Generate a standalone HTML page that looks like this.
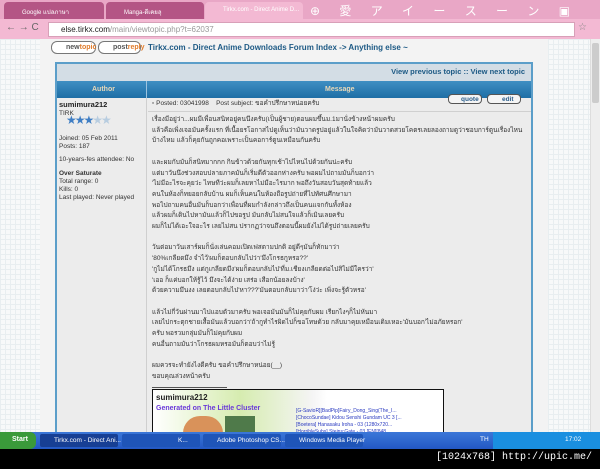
<!DOCTYPE html>
<html><head><meta charset="utf-8"><style>
*{margin:0;padding:0;box-sizing:border-box}
body{width:600px;height:469px;overflow:hidden;background:#f2f2f2;font-family:"Liberation Sans","DejaVu Sans",sans-serif;position:relative}
.abs{position:absolute}
#tabs{left:0;top:0;width:600px;height:19px;background:#e9a7c6}
.tab{position:absolute;top:2px;height:17px;border-radius:4px 4px 0 0;font-size:6px;color:#fff;padding:5px 0 0 18px;white-space:nowrap}
#addr{left:0;top:19px;width:600px;height:20px;background:#f3b9d3}
#url{left:48px;top:22px;width:527px;height:15px;background:#fff;border:1px solid #d8a0b8;font-size:8px;padding:2px 0 0 12px;color:#999}
#page{left:0;top:39px;width:590px;height:393px;background:#fff}
#lgrid{left:0;top:39px;width:40px;height:393px;background:#f7f9f9;background-image:linear-gradient(#e8eef0 1px,transparent 1px),linear-gradient(90deg,#e8eef0 1px,transparent 1px);background-size:5px 5px}
#rgrid{left:548px;top:39px;width:42px;height:393px;background:#f7f9f9;background-image:linear-gradient(#e8eef0 1px,transparent 1px),linear-gradient(90deg,#e8eef0 1px,transparent 1px);background-size:5px 5px}
#scroll{left:590px;top:39px;width:10px;height:393px;background:#eee;border-left:1px solid #ddd}
#mid{left:40px;top:39px;width:508px;height:393px;background:#f3f3f3}
.btn{position:absolute;top:41px;height:13px;border:1px solid #777;border-radius:6px;background:#fff;font-size:7px;font-weight:bold;padding:2px 0 0 14px;color:#555}
#nav{left:148px;top:43px;font-size:8px;font-weight:bold;color:#1d5a85}
#tbl{left:55px;top:62px;width:478px;height:370px;border:2px solid #5b9ec9;border-bottom:none;background:#ececec}
#vrow{left:57px;top:64px;width:474px;height:17px;background:#d3dde5;font-size:7.5px;font-weight:bold;color:#1d5a85;text-align:right;padding:3px 6px 0 0}
#hrow{left:57px;top:81px;width:474px;height:17px;background:linear-gradient(#3f8fc3,#1e6ea5);font-size:7px;font-weight:bold;color:#e8d8b8}
#acol{left:57px;top:98px;width:90px;height:334px;border-right:1px solid #cfcfcf}
.sm{font-size:6.5px;color:#333;line-height:8px}
.msg{position:absolute;left:152px;font-size:6.5px;color:#333;line-height:10.7px;white-space:nowrap;font-family:"Liberation Sans","DejaVu Sans",sans-serif}
#task{left:0;top:432px;width:600px;height:17px;background:linear-gradient(#3b77d8,#2358c4);}
.tb{position:absolute;top:434px;height:13px;background:#1f55b8;border-radius:2px;font-size:6.5px;color:#fff;padding:3px 0 0 14px;white-space:nowrap}
#black{left:0;top:449px;width:600px;height:20px;background:#000;color:#fff;font-family:"Liberation Mono",monospace;font-size:10px;text-align:right;padding:3px 8px 0 0}
</style></head><body>
<div class="abs" id="tabs">
<div class="tab" style="left:4px;width:100px;background:#b45585">Google แปลภาษา</div>
<div class="tab" style="left:106px;width:98px;background:#b45585">Manga-ดีเคยลุ</div>
<div class="tab" style="left:205px;width:98px;background:#f3b9d3">Tirkx.com - Direct Anime D...</div>
<div class="abs" style="left:310px;top:2px;width:290px;height:16px;color:#fff;font-size:12px;letter-spacing:8px">⊕ 愛 ア イ ー ス ー ン ▣</div>
</div>
<div class="abs" id="addr"><div class="abs" style="left:6px;top:3px;font-size:10px;color:#666">← → C</div><div class="abs" style="left:578px;top:3px;font-size:10px;color:#888">☆</div></div>
<div class="abs" id="url"><b style="color:#222;font-weight:normal">else.tirkx.com</b>/main/viewtopic.php?t=62037</div>
<div class="abs" id="page"></div>
<div class="abs" id="lgrid"></div><div class="abs" id="rgrid"></div><div class="abs" id="scroll"><div class="abs" style="left:1px;top:4px;width:7px;height:60px;background:#ccc;border-radius:2px"></div></div>
<div class="abs" id="mid"></div>
<div class="btn" style="left:51px;width:45px">new<span style="color:#e07c2c">topic</span></div>
<div class="btn" style="left:98px;width:43px">post<span style="color:#e07c2c">reply</span></div>
<div class="abs" id="nav">Tirkx.com - Direct Anime Downloads Forum Index -&gt; Anything else ~</div>
<div class="abs" id="tbl"></div>
<div class="abs" id="vrow">View previous topic :: View next topic</div>
<div class="abs" id="hrow"><span class="abs" style="left:35px;top:5px">Author</span><span class="abs" style="left:268px;top:5px">Message</span><div class="abs" style="left:89px;top:0;width:1px;height:17px;background:#9cc4e0"></div></div>
<div class="abs" id="acol">
<div style="position:absolute;left:2px;top:2px;font-size:7.5px;font-weight:bold;color:#222">sumimura212</div>
<div class="sm abs" style="left:2px;top:12px">TIRK</div>
<div class="abs" style="left:9px;top:15px;font-size:12px;color:#3f7ec4;letter-spacing:-2px">★★★<span style="color:#b8cde0">★★</span></div>
<div class="sm abs" style="left:2px;top:37px">Joined: 05 Feb 2011<br>Posts: 187</div>
<div class="sm abs" style="left:2px;top:58px">10-years-fes attendee: No</div>
<div class="sm abs" style="left:2px;top:72px"><b>Over Saturate</b><br>Total range: 0<br>Kills: 0<br>Last played: Never played</div>
</div>
<div class="abs" style="left:148px;top:98px;width:383px;height:14px;border-bottom:1px solid #d0d0d0"></div>
<div class="msg" style="top:99px;font-size:6.5px">▫ Posted: 03041998 &nbsp;&nbsp; Post subject: ขอคำปรึกษาหน่อยครับ</div>
<div class="abs" style="left:448px;top:94px;width:34px;height:10px;border:1px solid #555;border-radius:4px;font-size:6.5px;font-weight:bold;color:#2a5d8a;padding:1px 0 0 12px;background:#f5f5f5">quote</div>
<div class="abs" style="left:487px;top:94px;width:34px;height:10px;border:1px solid #555;border-radius:4px;font-size:6.5px;font-weight:bold;color:#2a5d8a;padding:1px 0 0 14px;background:#f5f5f5">edit</div>
<div class="msg" style="top:115px">เรื่องมีอยู่ว่า...ผมมีเพื่อนสนิทอยู่คนนึงครับ(เป็นผู้ชาย)ตอนผมขึ้นม.1มานั่งข้างหน้าผมครับ<br>แล้วคือเพิ่งเจอมันครั้งแรก ที่เนื้อยรโอกาสไปดูเห็นว่ามันวาดรูปอยู่แล้วในใจคิดว่ามันวาดสวยโคตรเลยลองถามดูว่าชอบการ์ตูนเรื่องไหน<br>บ้างไหม แล้วก็คุยกันถูกคอเพราะเป็นคอการ์ตูนเหมือนกันครับ<br><br>และผมกับมันก็สนิทมากกก กินข้าวด้วยกันทุกเช้าไปไหนไปด้วยกันน่ะครับ<br>แต่มาวันนึงช่วงสอบปลายภาคมันก็เริ่มดีตัวออกห่างครับ พอผมไปถามมันก็บอกว่า<br>'ไม่มีอะไรจะคุยว่ะ ไทษทีว่ะผมก็เลยหาไม่มีอะไรมาก พอถึงวันสอบวันสุดท้ายแล้ว<br>คนในห้องก็ทยอยกลับบ้าน ผมก็เห็นคนในห้องถือรูปถ่ายที่ไปทัศนศึกษามา<br>พอไปถามคนอื่นมันก็บอกว่าเพื่อนที่ผมกำลังกล่าวถึงเป็นคนแจกกันทั้งห้อง<br>แล้วผมก็เดินไปหามันแล้วก็ไปขอรูป มันกลับไม่สนใจแล้วก็เมินเลยครับ<br>ผมก็ไม่ได้เอะใจอะไร เลยไม่สน ปรากฏว่าจนถึงตอนนี้ผมยังไม่ได้รูปถ่ายเลยครับ<br><br>วันต่อมาวันเสาร์ผมก็นั่งเล่นคอมเปิดเฟสตามปกติ อยู่ดีๆมันก็ทักมาว่า<br>'80%เกลียดมึง จำไว้'ผมก็ตอบกลับไปว่า'มึงโกรธกูหรอ??'<br>'กูไม่ได้โกรธมึง แต่กูเกลียดมึง'ผมก็ตอบกลับไป'ที่ม.เชียงเกลียดต่อไปสิไม่มีใครว่า'<br>'เออ ก็แค่บอกให้รู้ไว้ มึงจะได้ง่าย เสร่อ เสือกน้อยลงบ้าง'<br>ด้วยความมึนงง เลยตอบกลับไป'หา???'มันตอบกลับมาว่า'โง่ว่ะ เพิ่งจะรู้ตัวหรอ'<br><br>แล้วไม่กี่วันผ่านมาไปแอบตัวมาครับ พอเจอมันมันก็ไม่คุยกับผม เรียกไงๆก็ไม่หันมา<br>เลยไปกระตุกชายเสื้อมันแล้วบอกว่า'ถ้ากูทำไรผิดไปก็ขอโทษด้วย กลับมาคุยเหมือนเดิมเหอะ'มันบอก'ไม่อภัยหรอก'<br>ครับ พอรวมกลุ่มมันก็ไม่คุยกับผม<br>คนอื่นถามมันว่าโกรธผมหรอมันก็ตอบว่าไม่รู้<br><br>ผมควรจะทำยังไงดีครับ ขอคำปรึกษาหน่อย(__)<br>ขอบคุณล่วงหน้าครับ</div>
<div class="abs" style="left:152px;top:387px;width:75px;height:1px;background:#555"></div>
<div class="abs" style="left:152px;top:389px;width:292px;height:43px;border:1px solid #111;border-bottom:none;background:linear-gradient(90deg,#fff 0,#d6ecb0 30%,#f5f5f5 55%,#fff 60%)">
<div class="abs" style="left:3px;top:3px;font-size:8px;font-weight:bold;color:#222">sumimura212</div>
<div class="abs" style="left:3px;top:15px;font-size:7px;font-weight:bold;color:#6a3ad8">Generated on The Little Cluster</div>
<div class="abs" style="left:30px;top:26px;width:40px;height:17px;background:#d9925a;border-radius:20px 20px 0 0"></div>
<div class="abs" style="left:72px;top:26px;width:30px;height:17px;background:#4f7a4a"></div>
<div class="abs" style="left:143px;top:18px;font-size:5px;line-height:7px;color:#2a3ac0;white-space:nowrap">[G-SavioR][BadPip]Fairy_Dong_Sing(The_I...<br>[ChocoSundae] Kidou Senshi Gundam UC 3 [...<br>[Boetera] Hanasaku Iroha - 03 (1280x720...<br>[HorribleSubs] Steins;Gate - 03 [EN][848...</div>
</div>
<div class="abs" id="task"></div>
<div class="abs" style="left:0;top:432px;width:36px;height:17px;background:#3a9a3a;border-radius:0 6px 6px 0;color:#fff;font-size:7px;font-weight:bold;padding:4px 0 0 12px">Start</div>
<div class="tb" style="left:40px;width:78px;background:#173f94">Tirkx.com - Direct Ani...</div>
<div class="tb" style="left:122px;width:78px"></div>
<div class="tb" style="left:164px;width:36px">K...</div>
<div class="tb" style="left:203px;width:78px">Adobe Photoshop CS...</div>
<div class="tb" style="left:285px;width:78px">Windows Media Player</div>
<div class="abs" style="left:493px;top:432px;width:107px;height:17px;background:#1a8fe0;font-size:6.5px;color:#fff;padding:4px 0 0 72px">17:02</div>
<div class="abs" style="left:480px;top:436px;font-size:6.5px;color:#fff">TH</div>
<div class="abs" id="black">[1024x768] http://upic.me/</div>
</body></html>
